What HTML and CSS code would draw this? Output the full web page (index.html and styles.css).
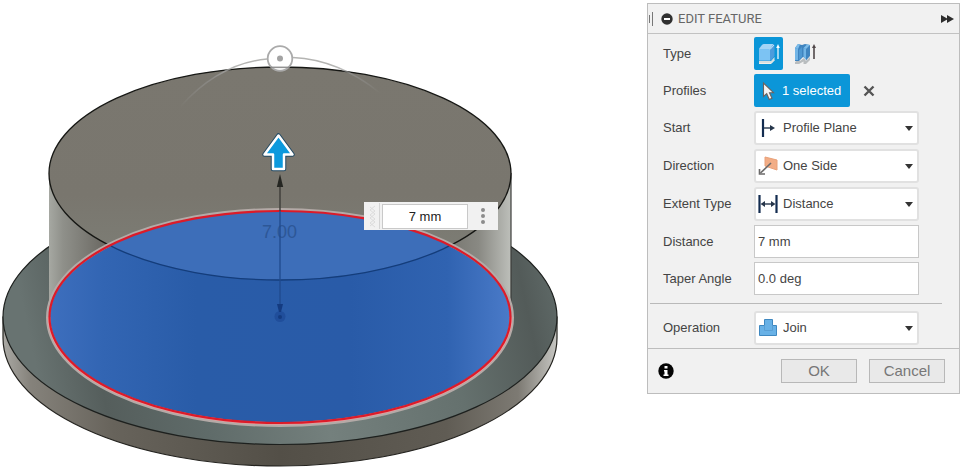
FILE: index.html
```html
<!DOCTYPE html>
<html lang="en">
<head>
<meta charset="utf-8">
<title>Edit Feature</title>
<link rel="stylesheet" href="styles.css">
</head>
<body>
<main class="workspace">
  <section class="scene" aria-label="Model view">
    <svg class="model" viewBox="0 0 647 476" preserveAspectRatio="xMinYMin meet">
      <defs>
        <linearGradient id="rim" x1="0" x2="1">
          <stop offset="0" stop-color="#aaa9a4"/><stop offset=".05" stop-color="#85827b"/>
          <stop offset=".2" stop-color="#67635b"/><stop offset=".5" stop-color="#534f47"/>
          <stop offset=".8" stop-color="#605c54"/><stop offset=".93" stop-color="#7d7a73"/>
          <stop offset="1" stop-color="#c6c6c2"/>
        </linearGradient>
        <linearGradient id="flange" x1="0" y1=".1" x2="1" y2="0">
          <stop offset="0" stop-color="#687371"/><stop offset=".11" stop-color="#555e5c"/>
          <stop offset=".28" stop-color="#5f6b69"/><stop offset=".5" stop-color="#74807d"/>
          <stop offset=".75" stop-color="#65716e"/><stop offset=".9" stop-color="#535b59"/>
          <stop offset="1" stop-color="#667270"/>
        </linearGradient>
        <linearGradient id="wall" x1="0" x2="1">
          <stop offset="0" stop-color="#a6a8a2"/><stop offset=".03" stop-color="#8f908a"/>
          <stop offset=".12" stop-color="#6b6963"/><stop offset=".5" stop-color="#56534b"/>
          <stop offset=".8" stop-color="#66645d"/><stop offset=".93" stop-color="#898983"/>
          <stop offset="1" stop-color="#bdbfba"/>
        </linearGradient>
        <linearGradient id="cap" x1="0" y1="0" x2="0" y2="1">
          <stop offset="0" stop-color="#7a776f"/><stop offset=".6" stop-color="#79766e"/>
          <stop offset="1" stop-color="#7e8078"/>
        </linearGradient>
        <linearGradient id="profile" x1="0" x2="1">
          <stop offset="0" stop-color="#3e6fbe"/><stop offset=".12" stop-color="#3265b3"/>
          <stop offset=".32" stop-color="#295ca8"/><stop offset=".65" stop-color="#295ba8"/>
          <stop offset=".86" stop-color="#3063b1"/><stop offset="1" stop-color="#4b7bc9"/>
        </linearGradient>
        <linearGradient id="arcL" x1="0" x2="1">
          <stop offset="0" stop-color="#aaa" stop-opacity="0"/><stop offset=".35" stop-color="#999" stop-opacity=".5"/><stop offset=".7" stop-color="#b4b4b2"/>
        </linearGradient>
        <linearGradient id="arcR" x1="0" x2="1">
          <stop offset=".4" stop-color="#b4b4b2"/><stop offset=".7" stop-color="#999" stop-opacity=".5"/><stop offset="1" stop-color="#aaa" stop-opacity="0"/>
        </linearGradient>
        <clipPath id="inProfile"><ellipse cx="280" cy="317" rx="231" ry="106"/></clipPath>
      </defs>
      <!-- flange -->
      <path d="M3 317V338A277 128 0 0 0 557 338V317Z" fill="url(#rim)" stroke="#24231f" stroke-width="1.200"/>
      <ellipse cx="280" cy="317" rx="277" ry="127.500" fill="url(#flange)" stroke="#1d201e" stroke-width="1.200"/>
      <!-- extruded body -->
      <path d="M49 173.500V317A231 106 0 0 0 511 317V173.500Z" fill="url(#wall)"/>
      <path d="M511 173V317" stroke="#3b3c39" stroke-width="1.200"/>
      <ellipse cx="280" cy="173.500" rx="231" ry="106.500" fill="url(#cap)" stroke="#161714" stroke-width="1.300"/>
      <!-- selected profile -->
      <ellipse cx="280" cy="317.500" rx="232" ry="107.500" fill="url(#profile)" stroke="#b4aaa7" stroke-width="4"/>
      <g clip-path="url(#inProfile)">
        <ellipse cx="280" cy="173.500" rx="231" ry="106.500" fill="#3d6eb9" stroke="#143d7b" stroke-width="1.300"/>
      </g>
      <path d="M49 317A231 106.500 0 0 0 511 317" fill="none" stroke="#ee9b9c" stroke-width="2.500"/>
      <ellipse cx="280" cy="317" rx="230.500" ry="106" fill="none" stroke="#dc1b29" stroke-width="2.200"/>
      <!-- height dimension -->
      <text class="dimension" x="262" y="238">7.00</text>
      <path d="M280 184V211" stroke="#42413c" stroke-width="1.500"/>
      <path d="M280 211V317" stroke="#1f4a8d" stroke-width="1.300"/>
      <path d="M280 174L283.200 187H276.800Z" fill="#252622"/>
      <circle cx="280" cy="316.500" r="5.500" fill="#204e9b"/><circle cx="280" cy="317" r="2" fill="#143b80"/>
      <path d="M277 304H283L281 312H279Z" fill="#143b80"/>
      <!-- taper handle -->
      <path d="M180 107C206 78 234 62 267 59" fill="none" stroke="url(#arcL)" stroke-width="1.500"/>
      <path d="M293 57.500C325 59 353 71 380 93" fill="none" stroke="url(#arcR)" stroke-width="1.500"/>
      <circle cx="280" cy="58.500" r="12.300" fill="#fff" fill-opacity=".9" stroke="#aaa" stroke-width="1.800"/>
      <path d="M271 67.300H289" stroke="#888" stroke-width="1.200"/>
      <circle cx="280" cy="58.500" r="3" fill="#a3a3a3"/>
      <!-- drag arrow -->
      <g stroke-linejoin="round">
        <path d="M278.500 135.500L292.500 154.500H284V169H273V154.500H264.500Z" fill="#214963" stroke="#214963" stroke-width="4.500"/>
        <path d="M278.500 135.500L292.500 154.500H284V169H273V154.500H264.500Z" fill="#0b99dd" stroke="#fff" stroke-width="2.500"/>
      </g>
    </svg>
    <div class="quick-entry">
      <svg class="grip" viewBox="0 0 18 28"><path d="M6 5l5 4-5 4 5 4-5 4 5 4M11 4L6 8l5 4-5 4 5 4-5 4" fill="none" stroke="#dcdcdc"/><path d="M15.500 1V27" stroke="#d4d4d4"/></svg>
      <input class="quick-input" value="7 mm" aria-label="Distance on model">
      <button class="more" aria-label="More options"><svg viewBox="0 0 8 20" width="8" height="20" fill="#8c8c8c"><circle cx="4" cy="4" r="2"/><circle cx="4" cy="10" r="2"/><circle cx="4" cy="16" r="2"/></svg></button>
    </div>
  </section>

  <form class="panel">
    <header class="panel-header">
      <svg class="handle" viewBox="0 0 5 16"><path d="M1.500 4V12M4.500 1V15" stroke="#777" fill="none"/></svg>
      <button type="button" class="plain" aria-label="Collapse"><svg viewBox="0 0 12 12" width="12" height="12"><circle cx="6" cy="6" r="5.700" fill="#303030"/><path d="M3 6H9" stroke="#fff" stroke-width="2"/></svg></button>
      <h1 class="title">EDIT FEATURE</h1>
      <button type="button" class="plain expand" aria-label="Expand"><svg viewBox="0 0 13 8" width="13" height="8" fill="#2d2d2d"><path d="M0 0L7 4L0 8ZM6 0L13 4L6 8Z"/></svg></button>
    </header>

    <div class="rows">
      <div class="row">
        <span class="label">Type</span>
        <div class="choices">
          <button type="button" class="type active" aria-label="Extrude"><svg viewBox="0 0 22 22" width="22" height="22">
            <path d="M1 18L13 18L16.500 14V17L13 21H1Z" fill="#d5dfe0"/><path d="M1 20.500H13L16.500 17" fill="none" stroke="#f1efe9"/>
            <path d="M1 6.500Q1 5 2 4L4 2Q5 1 6 1H15Q16.500 1 16.500 3V13L13 17.500H1Z" fill="#4c9cdc"/><path d="M1 6H12V17.500H1Z" fill="#7cc3f3"/><path d="M1 6L4 2Q5 1 6 1H15.500L12 6Z" fill="#a4d5f6"/><path d="M12 6.500L16 2" stroke="#c5e6fa"/>
            <path d="M20 16V4" stroke="#fff" stroke-width="1.200"/><path d="M20 1L21.800 5H18.200Z" fill="#fff"/></svg></button>
          <button type="button" class="type" aria-label="Thin extrude"><svg viewBox="0 0 22 22" width="22" height="22">
            <path d="M1 19L4 17L6 18L10 15L12 18L16 14V17L12 21H9.500V18.500L5 21H1Z" fill="#b9bdbf"/>
            <path d="M1 5L4 1L8 2L11 1L16 2V13L12 17.500V15L9 14L5 18H1Z" fill="#3f84bf"/><path d="M1 5L4 6V17H1ZM9.500 5L12 6V17L9.500 14Z" fill="#72b5e6"/><path d="M5 7L8 4V14L5 17Z" fill="#4e98d2"/><path d="M1 5L4 1L6 1.500L4 6ZM9.500 5L13 1.500L16 2L12 6Z" fill="#7cbcea"/>
            <path d="M20 16V4" stroke="#51484a" stroke-width="1.600"/><path d="M20 1L22 5H18Z" fill="#51484a"/></svg></button>
        </div>
      </div>
      <div class="row">
        <span class="label">Profiles</span>
        <div class="choices">
          <button type="button" class="selection"><svg viewBox="0 0 13 20" width="13" height="20"><path d="M1.500 2V15.500L4.700 12.700L7.300 18.500L10 17.300L7.500 11.700H11.500Z" fill="#f4f4f4" stroke="#6b625e" stroke-width="1.100"/></svg>1 selected</button>
          <button type="button" class="plain" aria-label="Clear profiles"><svg viewBox="0 0 12 12" width="12" height="12"><path d="M1.500 1.500L10.500 10.500M10.500 1.500L1.500 10.500" stroke="#555" stroke-width="2.400"/></svg></button>
        </div>
      </div>
      <div class="row">
        <label class="label" for="start">Start</label>
        <div class="picker">
          <select id="start"><option>Profile Plane</option></select>
          <svg class="icon" viewBox="0 0 20 20"><path d="M5 1V19" stroke="#132c50" stroke-width="2.200"/><path d="M6 10H13" stroke="#26364b" stroke-width="1.400"/><path d="M12 7L17 10L12 13Z" fill="#26364b"/></svg>
          <svg class="caret" viewBox="0 0 8 5"><path d="M0 0H8L4 5Z"/></svg>
        </div>
      </div>
      <div class="row">
        <label class="label" for="direction">Direction</label>
        <div class="picker">
          <select id="direction"><option>One Side</option></select>
          <svg class="icon" viewBox="0 0 20 20"><path d="M7 1L19 4V14L7 10Z" fill="#f2ad86" stroke="#e9a078"/><path d="M13 7L2.500 17" stroke="#6b6a6a" stroke-width="1.600"/><path d="M1.500 13V18H7" fill="none" stroke="#6b6a6a" stroke-width="1.600"/></svg>
          <svg class="caret" viewBox="0 0 8 5"><path d="M0 0H8L4 5Z"/></svg>
        </div>
      </div>
      <div class="row">
        <label class="label" for="extent">Extent Type</label>
        <div class="picker">
          <select id="extent"><option>Distance</option></select>
          <svg class="icon" viewBox="0 0 20 20"><path d="M1.500 1V19M18.500 1V19" stroke="#132c50" stroke-width="2.200"/><path d="M5 10H15" stroke="#26364b" stroke-width="1.400"/><path d="M7 7L2.500 10L7 13ZM13 7L17.500 10L13 13Z" fill="#26364b"/></svg>
          <svg class="caret" viewBox="0 0 8 5"><path d="M0 0H8L4 5Z"/></svg>
        </div>
      </div>
      <div class="row">
        <label class="label" for="distance">Distance</label>
        <input class="field" id="distance" value="7 mm">
      </div>
      <div class="row">
        <label class="label" for="taper">Taper Angle</label>
        <input class="field" id="taper" value="0.0 deg">
      </div>
    </div>
    <hr class="divider">
    <div class="rows last">
      <div class="row">
        <label class="label" for="operation">Operation</label>
        <div class="picker">
          <select id="operation"><option>Join</option></select>
          <svg class="icon" viewBox="0 0 20 20"><path d="M6.500 1.500H14.500V7.500H18.500V17.500H1.500V7.500H6.500Z" fill="#68b1e6" stroke="#3f88c0"/><path d="M6.500 7.500V12.500H14.500V7.500" fill="none" stroke="#5a9fd4"/></svg>
          <svg class="caret" viewBox="0 0 8 5"><path d="M0 0H8L4 5Z"/></svg>
        </div>
      </div>
    </div>
    <footer class="panel-footer">
      <button type="button" class="plain info" aria-label="Information"><svg viewBox="0 0 16 16" width="16" height="16"><circle cx="8" cy="8" r="7.700" fill="#050505"/><path d="M6.500 3H9.500V5.500H6.500ZM6 7H9.500V11.500H10.500V13H5.500V11.500H6.500V8.500H6Z" fill="#fff"/></svg></button>
      <button type="button" class="action">OK</button>
      <button type="button" class="action">Cancel</button>
    </footer>
  </form>
</main>
</body>
</html>
```
FILE: styles.css
```css
* { box-sizing: border-box; }
body {
  margin: 0;
  background: #fff;
  color: #444;
  font: 13px/16px "Liberation Sans", Arial, sans-serif;
}
button, input, select { font: inherit; color: inherit; margin: 0; }
button { padding: 0; border: 0; background: none; }
svg { display: block; }

.workspace {
  display: grid;
  grid-template-columns: minmax(0, 1fr) 313px;
  align-items: start;
  padding-right: 1px;
}
.scene { position: relative; }
.model { width: 100%; height: auto; }
.dimension { font-size: 18px; fill: #2d5797; }

.quick-entry {
  position: absolute;
  left: 364px;
  top: 202px;
  display: flex;
  align-items: center;
  width: 134px;
  height: 28px;
  background: #f1f1f1;
}
.grip { width: 18px; height: 28px; }
.quick-input {
  width: 86px;
  height: 25px;
  border: 1px solid #c9c9c9;
  background: #fff;
  color: #222;
  text-align: center;
}
.more { display: grid; flex: 1; place-items: center; }

.panel {
  margin-top: 3px;
  border: 1px solid #bdbdbd;
  background: #f1f1f1;
}
.panel-header {
  display: flex;
  align-items: center;
  height: 30px;
  padding-right: 5px;
  border-bottom: 1px solid #c2c2c2;
}
.handle { width: 5px; height: 16px; margin-right: 8px; }
.title {
  margin: 0 auto 0 5px;
  color: #666;
  font: 13px/16px Roboto, sans-serif;
}
.plain { display: grid; place-items: center; }

.rows { display: grid; gap: 4px; padding: 3px 40px 0 15px; }
.row {
  display: grid;
  grid-template-columns: 91px minmax(0, 1fr);
  align-items: center;
}
.choices { display: flex; align-items: center; gap: 13px; height: 33px; }
.type {
  display: grid;
  place-items: center;
  width: 29px;
  height: 33px;
  border-radius: 2px;
}
.type + .type { margin-left: -6px; }
.active, .selection { background: #0b96d8; }
.selection {
  display: flex;
  align-items: center;
  gap: 7px;
  height: 33px;
  padding: 0 9px 0 8px;
  border-radius: 2px;
  color: #fff;
}

.picker { display: grid; align-items: center; }
.picker > * { grid-area: 1 / 1; }
.picker select {
  width: 100%;
  height: 34px;
  padding: 0 24px 0 27px;
  border: 2px solid #e1e1e1;
  border-radius: 3px;
  background: #fff;
  appearance: none;
}
.icon, .caret { pointer-events: none; }
.icon { width: 20px; height: 20px; margin-left: 4px; }
.caret { width: 8px; height: 5px; margin-right: 6px; justify-self: end; fill: #333; }
.field {
  width: 100%;
  height: 33px;
  padding: 0 3px;
  border: 1px solid #c8c8c8;
  background: #fff;
}
.divider {
  height: 1px;
  margin: 8px 17px 0 2px;
  border: 0;
  background: #b9b9b9;
}
.last { padding-top: 7px; }

.panel-footer {
  display: flex;
  align-items: center;
  gap: 12px;
  height: 45px;
  margin-top: 3px;
  padding: 0 14px 0 10px;
  border-top: 1px solid #bdbdbd;
}
.info { margin-right: auto; }
.action {
  width: 76px;
  height: 24px;
  border: 1px solid #b8b8b8;
  background: #e9e9e9;
  color: #777;
  font-size: 15px;
}
```
